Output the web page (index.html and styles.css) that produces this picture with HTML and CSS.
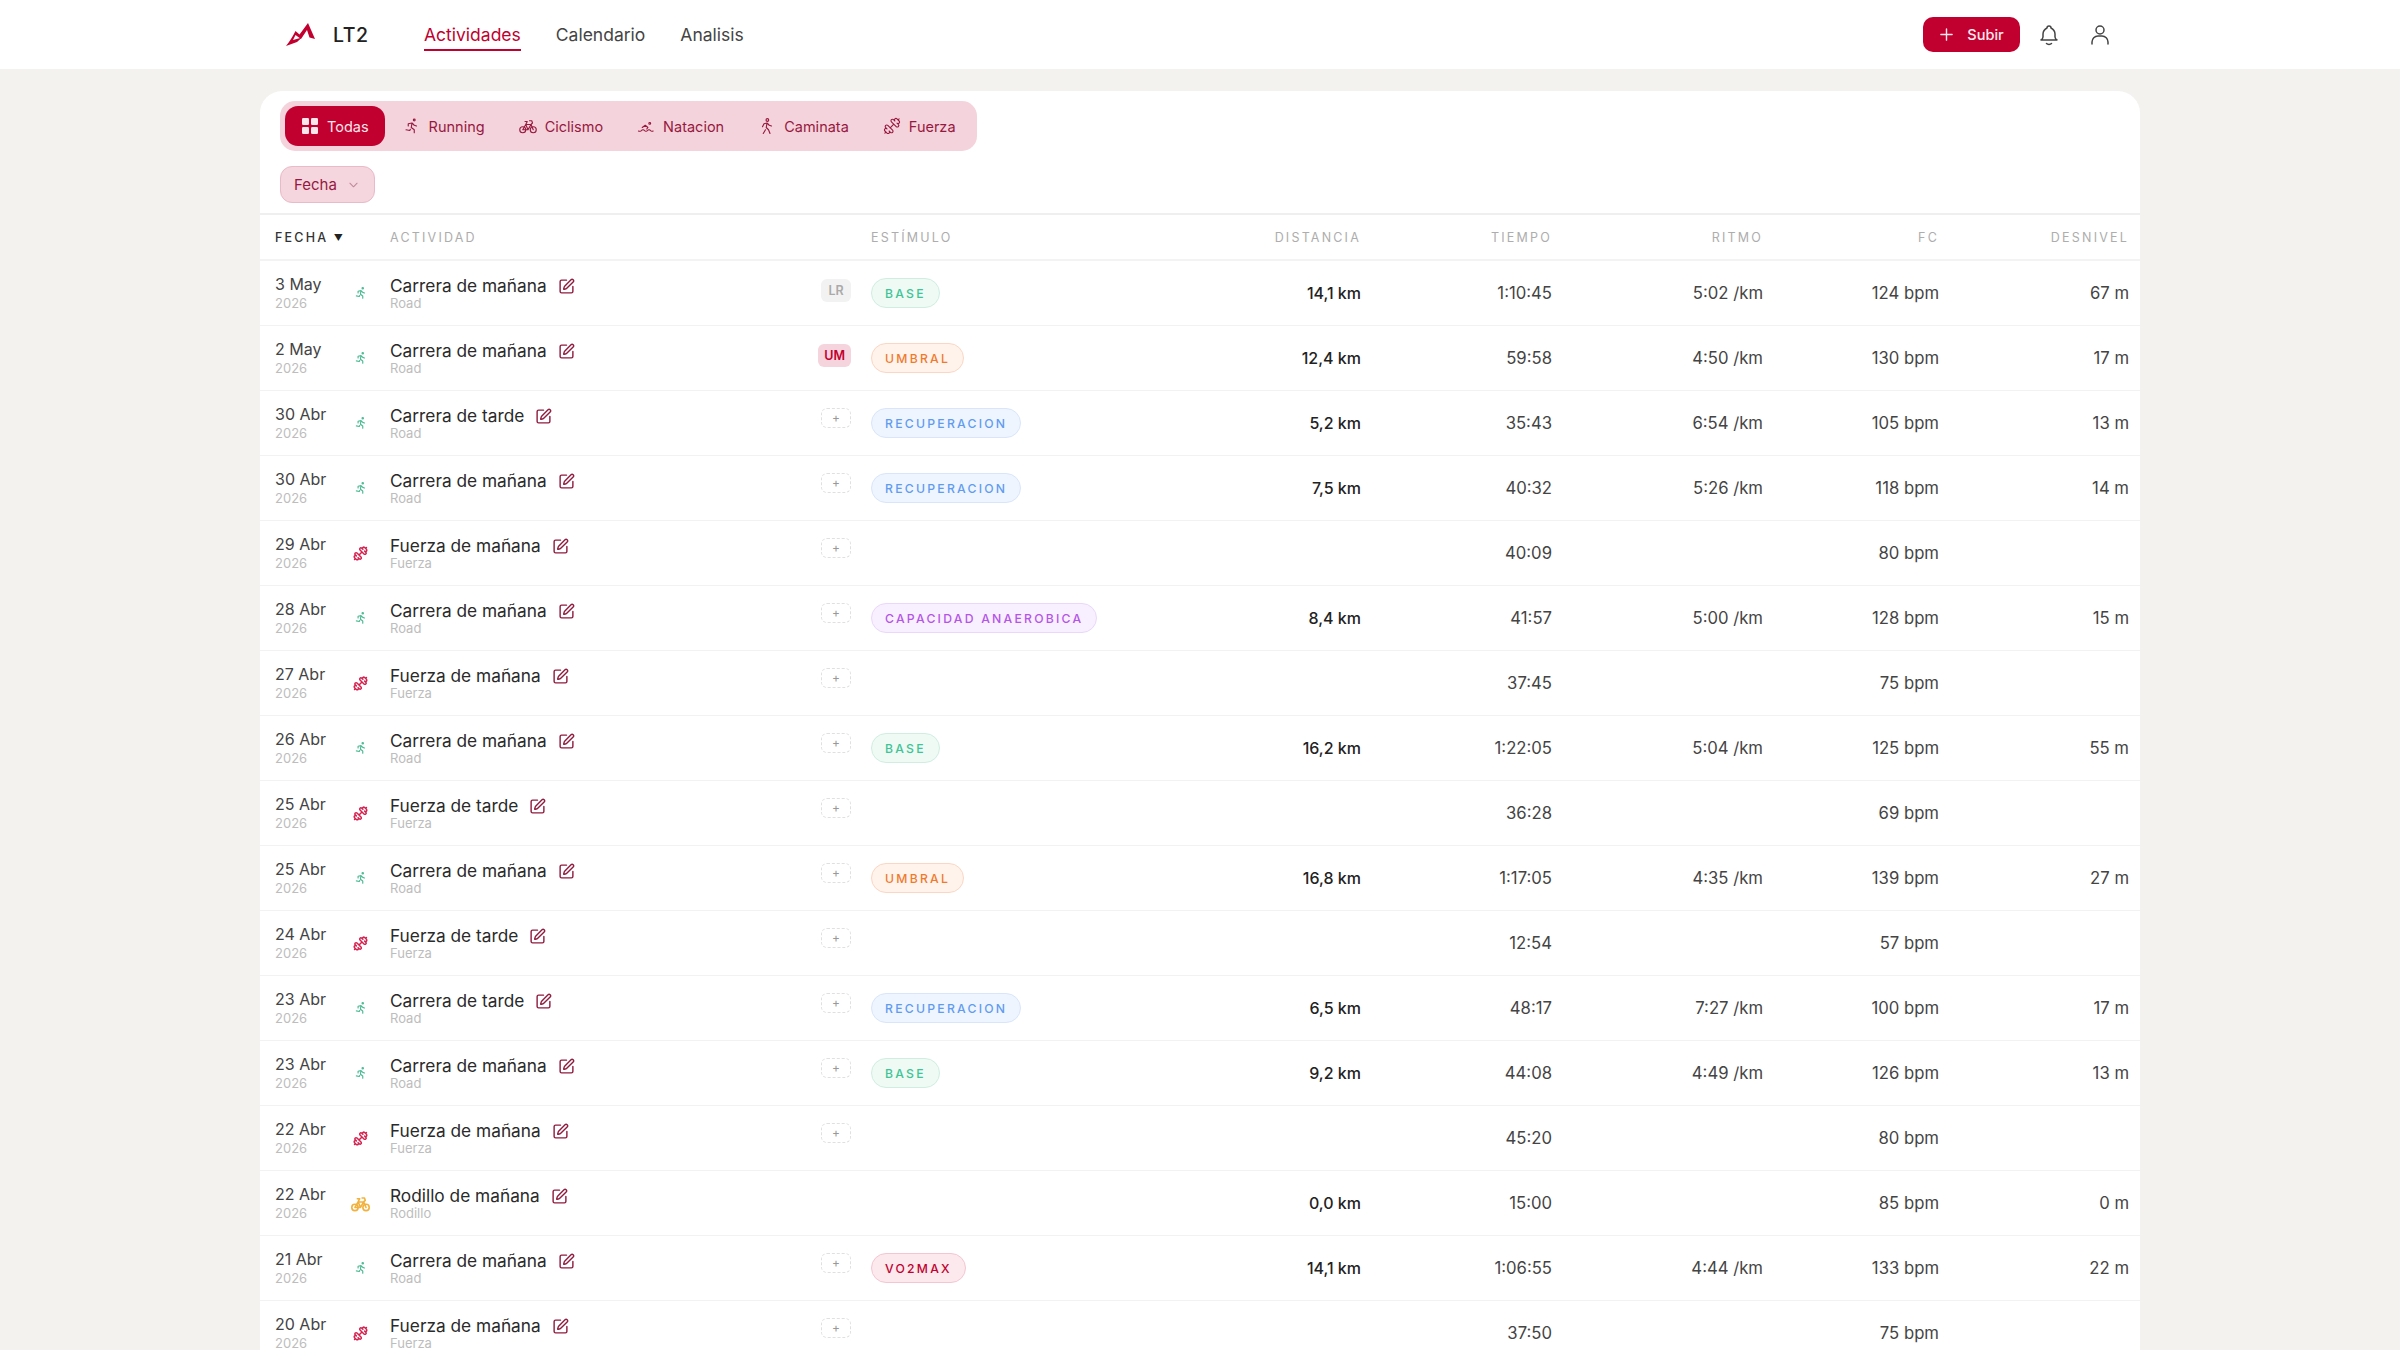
FILE: index.html
```html
<!DOCTYPE html>
<html lang="es">
<head>
<meta charset="utf-8">
<title>LT2 - Actividades</title>
<link rel="stylesheet" href="styles.css">
</head>
<body>
<svg class="defs" width="0" height="0" aria-hidden="true">
  <symbol id="i-run" viewBox="0 0 24 24"><circle cx="15" cy="4" r="1.2"/><path d="M4 17l5 1l.75-1.5M15 21v-4l-4-3l1-6M7 12V9l5-1l3 3l3 1"/></symbol>
  <symbol id="i-bike" viewBox="0 0 24 24"><circle cx="5" cy="17" r="4"/><circle cx="19" cy="17" r="4"/><path d="M5 17l4-7h7l3 7M9 10l3 7l4-7M12 17H5M8 6h3l-2 4M14 5h3l1 3l-2 2"/></symbol>
  <symbol id="i-swim" viewBox="0 0 24 24"><circle cx="17" cy="8.5" r="1.2"/><path d="M7 14l4-3l3.5 3l-1.5 2M2 18.75a2.4 2.4 0 0 0 1.5 .25a2.4 2.4 0 0 0 2.500-1a2.4 2.4 0 0 1 2-1a2.4 2.4 0 0 1 2 1a2.4 2.4 0 0 0 2 1a2.4 2.4 0 0 0 2-1a2.4 2.4 0 0 1 2-1a2.4 2.4 0 0 1 2 1a2.4 2.4 0 0 0 2 1a2.4 2.4 0 0 0 1.500-.25"/></symbol>
  <symbol id="i-walk" viewBox="0 0 24 24"><circle cx="12.500" cy="4" r="1.800"/><path d="M7 22l3-5M16 22l-2-5l-3-3l1-6M6 13l2-4l4-1l3 3l3 1"/></symbol>
  <symbol id="i-gym" viewBox="0 0 24 24"><g transform="matrix(-1 0 0 1 24 0)"><path d="M14.4 14.4 9.6 9.6M18.657 21.485a2 2 0 1 1-2.829-2.828l-1.767 1.768a2 2 0 1 1-2.829-2.829l6.364-6.364a2 2 0 1 1 2.829 2.829l-1.768 1.767a2 2 0 1 1 2.828 2.829zM21.5 21.5l-1.4-1.4M3.9 3.9 2.5 2.5M6.404 12.768a2 2 0 1 1-2.829-2.829l1.768-1.767a2 2 0 1 1-2.828-2.829l2.828-2.828a2 2 0 1 1 2.829 2.828l1.767-1.768a2 2 0 1 1 2.829 2.829z"/></g></symbol>
  <symbol id="i-edit" viewBox="0 0 24 24"><path d="M12 3H5a2 2 0 0 0-2 2v14a2 2 0 0 0 2 2h14a2 2 0 0 0 2-2v-7"/><path d="M18.375 2.625a1 1 0 0 1 3 3l-9.013 9.014a2 2 0 0 1-.853.505l-2.873.84a.5.5 0 0 1-.62-.62l.84-2.873a2 2 0 0 1 .506-.852z"/></symbol>
</svg>

<header class="topbar">
  <div class="brand">
    <svg class="logo" viewBox="0 0 30 24"><path class="logo-fill" d="M1 24C5 19 8 14 10.500 9L14.500 12.500L23 1L30 17L24.500 15.500L22 8L16 17L10.500 13L8 18L17 15.500L12 20z"/></svg>
    <span class="brand-name">LT2</span>
  </div>
  <nav class="mainnav">
    <a class="navlink is-active">Actividades</a>
    <a class="navlink">Calendario</a>
    <a class="navlink">Analisis</a>
  </nav>
  <div class="top-actions">
    <button class="upload"><svg class="plus" viewBox="0 0 16 16"><path d="M8 2v12M2 8h12"/></svg>Subir</button>
    <svg class="topicon bell" viewBox="0 0 24 24"><path d="M10 5a2 2 0 1 1 4 0a7 7 0 0 1 4 6v3a4 4 0 0 0 2 3H4a4 4 0 0 0 2-3v-3a7 7 0 0 1 4-6"/><path d="M9.500 20.500a3 2 0 0 0 5 0"/></svg>
    <svg class="topicon user" viewBox="0 0 24 24"><circle cx="12" cy="7" r="4"/><path d="M4 21v-2a6 6 0 0 1 6-6h4a6 6 0 0 1 6 6v2"/></svg>
  </div>
</header>

<main class="card">
  <div class="filters">
    <div class="tabs">
      <button class="tab is-on"><svg class="tabicon grid" viewBox="0 0 18 18"><rect x="1" y="1" width="7" height="7" rx="1.2"/><rect x="10" y="1" width="7" height="7" rx="1.2"/><rect x="1" y="10" width="7" height="7" rx="1.2"/><rect x="10" y="10" width="7" height="7" rx="1.2"/></svg>Todas</button>
      <button class="tab"><svg class="tabicon"><use href="#i-run"/></svg>Running</button>
      <button class="tab"><svg class="tabicon"><use href="#i-bike"/></svg>Ciclismo</button>
      <button class="tab"><svg class="tabicon"><use href="#i-swim"/></svg>Natacion</button>
      <button class="tab"><svg class="tabicon"><use href="#i-walk"/></svg>Caminata</button>
      <button class="tab"><svg class="tabicon"><use href="#i-gym"/></svg>Fuerza</button>
    </div>
    <button class="datefilter">Fecha<svg class="chev" viewBox="0 0 10 6"><path d="M1 1l4 4l4-4"/></svg></button>
  </div>

  <div class="row head">
    <span class="th sorted">FECHA <span class="sort-mark">▼</span></span>
    <span class="th">ACTIVIDAD</span>
    <span class="th">ESTÍMULO</span>
    <span class="th num">DISTANCIA</span>
    <span class="th num">TIEMPO</span>
    <span class="th num">RITMO</span>
    <span class="th num">FC</span>
    <span class="th num">DESNIVEL</span>
  </div>

  <div class="row"><div class="date">3 May<small>2026</small></div><svg class="sport run"><use href="#i-run"/></svg><div class="act"><div class="act-main"><div class="act-title">Carrera de mañana<svg class="edit"><use href="#i-edit"/></svg></div><small>Road</small></div><span class="tag tag-lr">LR</span></div><div><span class="pill base">BASE</span></div><div class="dist">14,1 km</div><div class="val">1:10:45</div><div class="val">5:02 /km</div><div class="val">124 bpm</div><div class="val">67 m</div></div>

  <div class="row"><div class="date">2 May<small>2026</small></div><svg class="sport run"><use href="#i-run"/></svg><div class="act"><div class="act-main"><div class="act-title">Carrera de mañana<svg class="edit"><use href="#i-edit"/></svg></div><small>Road</small></div><span class="tag tag-um">UM</span></div><div><span class="pill umbral">UMBRAL</span></div><div class="dist">12,4 km</div><div class="val">59:58</div><div class="val">4:50 /km</div><div class="val">130 bpm</div><div class="val">17 m</div></div>

  <div class="row"><div class="date">30 Abr<small>2026</small></div><svg class="sport run"><use href="#i-run"/></svg><div class="act"><div class="act-main"><div class="act-title">Carrera de tarde<svg class="edit"><use href="#i-edit"/></svg></div><small>Road</small></div><span class="tag tag-add">+</span></div><div><span class="pill recu">RECUPERACION</span></div><div class="dist">5,2 km</div><div class="val">35:43</div><div class="val">6:54 /km</div><div class="val">105 bpm</div><div class="val">13 m</div></div>

  <div class="row"><div class="date">30 Abr<small>2026</small></div><svg class="sport run"><use href="#i-run"/></svg><div class="act"><div class="act-main"><div class="act-title">Carrera de mañana<svg class="edit"><use href="#i-edit"/></svg></div><small>Road</small></div><span class="tag tag-add">+</span></div><div><span class="pill recu">RECUPERACION</span></div><div class="dist">7,5 km</div><div class="val">40:32</div><div class="val">5:26 /km</div><div class="val">118 bpm</div><div class="val">14 m</div></div>

  <div class="row"><div class="date">29 Abr<small>2026</small></div><svg class="sport gym"><use href="#i-gym"/></svg><div class="act"><div class="act-main"><div class="act-title">Fuerza de mañana<svg class="edit"><use href="#i-edit"/></svg></div><small>Fuerza</small></div><span class="tag tag-add">+</span></div><div></div><div class="dist"></div><div class="val">40:09</div><div class="val"></div><div class="val">80 bpm</div><div class="val"></div></div>

  <div class="row"><div class="date">28 Abr<small>2026</small></div><svg class="sport run"><use href="#i-run"/></svg><div class="act"><div class="act-main"><div class="act-title">Carrera de mañana<svg class="edit"><use href="#i-edit"/></svg></div><small>Road</small></div><span class="tag tag-add">+</span></div><div><span class="pill anaer">CAPACIDAD ANAEROBICA</span></div><div class="dist">8,4 km</div><div class="val">41:57</div><div class="val">5:00 /km</div><div class="val">128 bpm</div><div class="val">15 m</div></div>

  <div class="row"><div class="date">27 Abr<small>2026</small></div><svg class="sport gym"><use href="#i-gym"/></svg><div class="act"><div class="act-main"><div class="act-title">Fuerza de mañana<svg class="edit"><use href="#i-edit"/></svg></div><small>Fuerza</small></div><span class="tag tag-add">+</span></div><div></div><div class="dist"></div><div class="val">37:45</div><div class="val"></div><div class="val">75 bpm</div><div class="val"></div></div>

  <div class="row"><div class="date">26 Abr<small>2026</small></div><svg class="sport run"><use href="#i-run"/></svg><div class="act"><div class="act-main"><div class="act-title">Carrera de mañana<svg class="edit"><use href="#i-edit"/></svg></div><small>Road</small></div><span class="tag tag-add">+</span></div><div><span class="pill base">BASE</span></div><div class="dist">16,2 km</div><div class="val">1:22:05</div><div class="val">5:04 /km</div><div class="val">125 bpm</div><div class="val">55 m</div></div>

  <div class="row"><div class="date">25 Abr<small>2026</small></div><svg class="sport gym"><use href="#i-gym"/></svg><div class="act"><div class="act-main"><div class="act-title">Fuerza de tarde<svg class="edit"><use href="#i-edit"/></svg></div><small>Fuerza</small></div><span class="tag tag-add">+</span></div><div></div><div class="dist"></div><div class="val">36:28</div><div class="val"></div><div class="val">69 bpm</div><div class="val"></div></div>

  <div class="row"><div class="date">25 Abr<small>2026</small></div><svg class="sport run"><use href="#i-run"/></svg><div class="act"><div class="act-main"><div class="act-title">Carrera de mañana<svg class="edit"><use href="#i-edit"/></svg></div><small>Road</small></div><span class="tag tag-add">+</span></div><div><span class="pill umbral">UMBRAL</span></div><div class="dist">16,8 km</div><div class="val">1:17:05</div><div class="val">4:35 /km</div><div class="val">139 bpm</div><div class="val">27 m</div></div>

  <div class="row"><div class="date">24 Abr<small>2026</small></div><svg class="sport gym"><use href="#i-gym"/></svg><div class="act"><div class="act-main"><div class="act-title">Fuerza de tarde<svg class="edit"><use href="#i-edit"/></svg></div><small>Fuerza</small></div><span class="tag tag-add">+</span></div><div></div><div class="dist"></div><div class="val">12:54</div><div class="val"></div><div class="val">57 bpm</div><div class="val"></div></div>

  <div class="row"><div class="date">23 Abr<small>2026</small></div><svg class="sport run"><use href="#i-run"/></svg><div class="act"><div class="act-main"><div class="act-title">Carrera de tarde<svg class="edit"><use href="#i-edit"/></svg></div><small>Road</small></div><span class="tag tag-add">+</span></div><div><span class="pill recu">RECUPERACION</span></div><div class="dist">6,5 km</div><div class="val">48:17</div><div class="val">7:27 /km</div><div class="val">100 bpm</div><div class="val">17 m</div></div>

  <div class="row"><div class="date">23 Abr<small>2026</small></div><svg class="sport run"><use href="#i-run"/></svg><div class="act"><div class="act-main"><div class="act-title">Carrera de mañana<svg class="edit"><use href="#i-edit"/></svg></div><small>Road</small></div><span class="tag tag-add">+</span></div><div><span class="pill base">BASE</span></div><div class="dist">9,2 km</div><div class="val">44:08</div><div class="val">4:49 /km</div><div class="val">126 bpm</div><div class="val">13 m</div></div>

  <div class="row"><div class="date">22 Abr<small>2026</small></div><svg class="sport gym"><use href="#i-gym"/></svg><div class="act"><div class="act-main"><div class="act-title">Fuerza de mañana<svg class="edit"><use href="#i-edit"/></svg></div><small>Fuerza</small></div><span class="tag tag-add">+</span></div><div></div><div class="dist"></div><div class="val">45:20</div><div class="val"></div><div class="val">80 bpm</div><div class="val"></div></div>

  <div class="row"><div class="date">22 Abr<small>2026</small></div><svg class="sport ride"><use href="#i-bike"/></svg><div class="act"><div class="act-main"><div class="act-title">Rodillo de mañana<svg class="edit"><use href="#i-edit"/></svg></div><small>Rodillo</small></div></div><div></div><div class="dist">0,0 km</div><div class="val">15:00</div><div class="val"></div><div class="val">85 bpm</div><div class="val">0 m</div></div>

  <div class="row"><div class="date">21 Abr<small>2026</small></div><svg class="sport run"><use href="#i-run"/></svg><div class="act"><div class="act-main"><div class="act-title">Carrera de mañana<svg class="edit"><use href="#i-edit"/></svg></div><small>Road</small></div><span class="tag tag-add">+</span></div><div><span class="pill vo2">VO2MAX</span></div><div class="dist">14,1 km</div><div class="val">1:06:55</div><div class="val">4:44 /km</div><div class="val">133 bpm</div><div class="val">22 m</div></div>

  <div class="row"><div class="date">20 Abr<small>2026</small></div><svg class="sport gym"><use href="#i-gym"/></svg><div class="act"><div class="act-main"><div class="act-title">Fuerza de mañana<svg class="edit"><use href="#i-edit"/></svg></div><small>Fuerza</small></div><span class="tag tag-add">+</span></div><div></div><div class="dist"></div><div class="val">37:50</div><div class="val"></div><div class="val">75 bpm</div><div class="val"></div></div>
</main>
</body>
</html>
```

FILE: styles.css
```css
* { box-sizing: border-box; }
html, body { margin: 0; height: 1350px; overflow: hidden; }
body {
  background: #f3f2ef;
  color: #222;
  font-family: "Inter", "Liberation Sans", sans-serif;
  font-size: 15px;
}
.defs { position: absolute; }
svg { fill: none; stroke: currentColor; stroke-linecap: round; stroke-linejoin: round; stroke-width: 2; }
button { font: inherit; border: 0; cursor: pointer; }

/* top bar */
.topbar {
  height: 69px;
  background: #fff;
  display: flex;
  align-items: center;
  padding: 0 288px 0 285px;
}
.brand { display: flex; align-items: center; gap: 18px; width: 139px; }
.logo { width: 30px; height: 24px; stroke: none; margin-top: -2px; }
.logo-fill { fill: #c1002f; stroke: none; }
.brand-name { font-size: 19.5px; font-weight: 500; color: #222; letter-spacing: .5px; }
.mainnav { display: flex; gap: 35px; height: 100%; align-items: stretch; }
.navlink {
  display: flex;
  align-items: center;
  font-size: 17.5px;
  color: #444;
  border-bottom: 2px solid transparent;
  height: 42px;
  margin-top: 9px;
  padding-top: 10px;
}
.navlink.is-active { color: #c1002f; border-bottom-color: #c1002f; }
.top-actions { margin-left: auto; display: flex; align-items: center; }
.upload {
  width: 97px;
  height: 35px;
  border-radius: 10px;
  background: #c1002f;
  color: #fde8ed;
  font-size: 14.5px;
  font-weight: 500;
  display: flex;
  align-items: center;
  justify-content: center;
  gap: 13px;
  margin-right: 17px;
}
.plus { width: 15px; height: 15px; stroke-width: 1.5; }
.topicon { width: 24px; height: 24px; color: #444; stroke-width: 1.5; }
.bell { margin-right: 27px; }

/* card */
.card {
  margin: 22px 260px 0;
  background: #fff;
  border-radius: 22px 22px 0 0;
  min-height: 1300px;
}
.filters { padding: 10px 20px 10px; border-bottom: 2px solid #efefef; }
.tabs {
  display: inline-flex;
  gap: 2px;
  padding: 5px;
  background: #f4d3dc;
  border-radius: 15px;
  vertical-align: top;
}
.tab {
  height: 40px;
  padding: 0 16px;
  display: flex;
  align-items: center;
  gap: 8px;
  background: transparent;
  color: #97193f;
  font-size: 14.5px;
  border-radius: 13px;
}
.tab.is-on { background: #c1002f; color: #fbe6eb; }
.tabicon { width: 18px; height: 18px; stroke-width: 1.5; }
.grid { fill: #fbe6eb; stroke: none; }
.datefilter {
  display: flex;
  align-items: center;
  gap: 12px;
  width: 95px;
  height: 37px;
  margin-top: 15px;
  padding: 0 13px;
  background: #f5d6de;
  border: 1px solid #e9bac7;
  border-radius: 12px;
  color: #97193f;
  font-size: 15px;
}
.chev { width: 9px; height: 6px; stroke: #bf8a99; stroke-width: 1.2; }

/* table rows */
.row {
  display: grid;
  grid-template-columns: 72px 43px 481px 300px 190px 191px 211px 176px 190px;
  align-items: center;
  height: 65px;
  padding: 0 11px 0 15px;
  border-bottom: 1px solid #f2f2f2;
}
.row.head { height: 46px; border-bottom: 2px solid #f3f3f3; }
.th { font-size: 12.5px; letter-spacing: 2.2px; color: #adadad; }
.th.sorted { color: #333; grid-column: 1 / span 2; font-weight: 500; }
.sort-mark { font-size: 9px; letter-spacing: 0; vertical-align: 1px; color: #222; }
.th.num { text-align: right; }
.date { font-size: 16px; color: #444; line-height: 18px; margin-top: 1px; }
small { display: block; font-size: 13px; color: #bdbdbd; line-height: 18px; }
.date small { margin-top: 1px; }
.sport { width: 14px; height: 14px; stroke-width: 2; margin-left: 7px; }
.run { color: #4dbb94; }
.gym { color: #d5224f; width: 15px; height: 15px; stroke-width: 2.4; margin-left: 6px; }
.ride { color: #f2b13c; width: 19px; height: 19px; margin-left: 4px; }
.act { display: flex; align-items: center; justify-content: space-between; padding-right: 20px; }
.act-title { display: flex; align-items: center; gap: 11px; font-size: 17.3px; color: #2a2a2a; line-height: 20px; }
.act small { line-height: 14px; }
.edit { width: 17px; height: 17px; color: #8f1d3f; }
.tag {
  font-size: 12.5px;
  font-weight: 600;
  border-radius: 6px;
  height: 23px;
  min-width: 30px;
  display: flex;
  align-items: center;
  justify-content: center;
  margin-bottom: 6px;
  padding: 0 6px;
}
.tag-lr { background: #f2f2f2; color: #aaa; }
.tag-um { background: #f6d4dd; color: #c1002f; }
.tag-add { height: 20px; border: 1px dashed #e0e0e0; color: #999; font-weight: 400; font-size: 12px; margin-bottom: 11px; }
.pill {
  display: inline-flex;
  align-items: center;
  height: 30px;
  padding: 0 13px;
  border: 1px solid;
  border-radius: 15px;
  font-size: 12.2px;
  font-weight: 500;
  letter-spacing: 2.25px;
  vertical-align: middle;
}
.base { background: #effaf5; border-color: #cfeee1; color: #3fc495; }
.umbral { background: #fff3ec; border-color: #fbd6c2; color: #ef7a2c; }
.recu { background: #eff5fe; border-color: #d8e5fb; color: #5f9cf0; }
.anaer { background: #f8f0fe; border-color: #ead7fb; color: #b455e8; }
.vo2 { background: #fbe9ed; border-color: #f5c6d2; color: #c1002f; }
.dist, .val { text-align: right; font-size: 16.7px; }
.dist { color: #222; font-weight: 500; font-size: 16px; }
.val { color: #444; }
```
